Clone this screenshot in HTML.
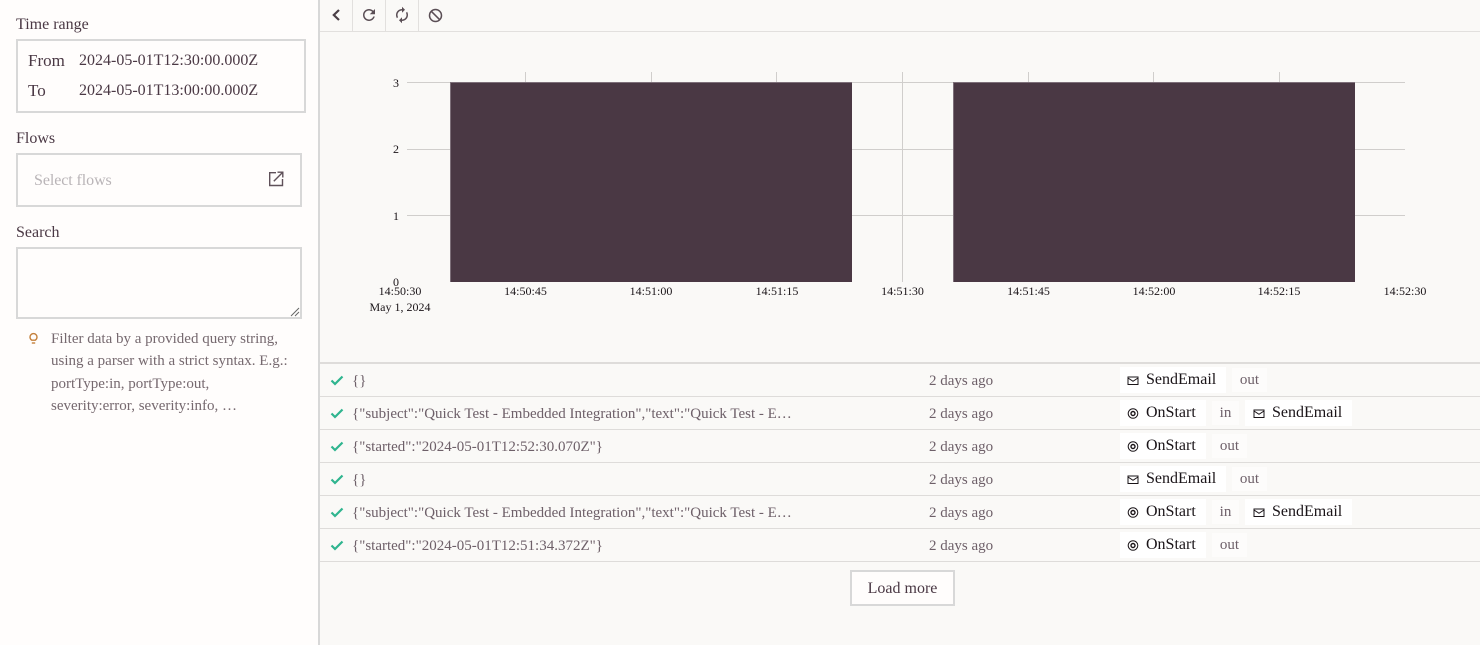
<!DOCTYPE html>
<html><head><meta charset="utf-8"><style>
*{box-sizing:border-box}
html,body{margin:0;padding:0;width:1480px;height:645px;overflow:hidden;background:#faf9f7;font-family:"Liberation Serif",serif;color:#4a3844}
.a{position:absolute;white-space:nowrap}
#side{left:0;top:0;width:320px;height:645px;background:#fffdfc;border-right:2px solid #d8d8d8}
.box{position:absolute;border:2px solid #d8d8d8;background:#fffdfc}
.l{font-size:16px;line-height:18px;margin-top:1px}
.hr{position:absolute;left:320px;width:1160px;height:1px;background:#dedcda}
.g{font-size:15px;line-height:18px;color:#6e6069;margin-top:1px}
.chip{position:absolute;background:#fff;height:26px;font-size:16px;line-height:22px;color:#1a1418;white-space:nowrap}
.chip span{position:absolute;top:2px;left:26px}
.chip svg{position:absolute;left:7px;top:8px}
.chip.r span{left:27px}
.chip.r svg{left:8px}
.pt{position:absolute;background:#fdfcfb;height:24px;font-size:15px;line-height:24px;color:#6e6069;text-align:center}
.sep{position:absolute;top:0;width:1px;height:31px;background:#e2e0de}
</style></head><body>
<div class="a" id="side"></div>
<div class="a l" style="left:16px;top:15px">Time range</div>
<div class="box" style="left:16px;top:39px;width:290px;height:74px"></div>
<div class="a l" style="left:28px;top:51px;font-size:17px">From</div>
<div class="a l" style="left:79px;top:51px">2024-05-01T12:30:00.000Z</div>
<div class="a l" style="left:28px;top:81px;font-size:17px">To</div>
<div class="a l" style="left:79px;top:81px">2024-05-01T13:00:00.000Z</div>
<div class="a l" style="left:16px;top:129px">Flows</div>
<div class="box" style="left:16px;top:153px;width:286px;height:54px"></div>
<div class="a l" style="left:34px;top:171px;color:#b9b4b7;letter-spacing:-.08px">Select flows</div>
<svg class="a" style="left:268px;top:171px" width="16" height="16" viewBox="0 0 16 16" fill="none" stroke="#5f5059" stroke-width="1.4"><path d="M8 1.700H1.700v12.800h12.800V8"/><path d="M5.800 10.200 14.500 1.500M9.500 1.200h5.300v5.300"/></svg>
<div class="a l" style="left:16px;top:223px">Search</div>
<div class="box" style="left:16px;top:247px;width:286px;height:72px"></div>
<svg class="a" style="left:290px;top:307px" width="10" height="10" stroke="#666" stroke-width="1"><path d="M1 9 9 1M5 9 9 5"/></svg>
<svg class="a" style="left:27px;top:331px" width="13" height="14" viewBox="0 0 13 14" fill="none" stroke="#c4803c" stroke-width="1.400"><path d="M4.700 9.200C3.600 8.400 3 7.400 3 6.100a3.500 3.500 0 0 1 7 0c0 1.300-.6 2.300-1.700 3.100z"/><path d="M4.800 12h3.400"/></svg>
<div class="a" style="left:51px;top:328px;font-size:15px;line-height:22.4px;color:#76696f">Filter data by a provided query string,<br>using a parser with a strict syntax. E.g.:<br>portType:in, portType:out,<br>severity:error, severity:info, …</div>

<div class="a" style="left:320px;top:0;width:1160px;height:32px;border-bottom:1px solid #e2e0de"></div>
<div class="sep" style="left:352px"></div><div class="sep" style="left:385px"></div><div class="sep" style="left:418px"></div>
<svg class="a" style="left:328px;top:7px" width="16" height="16" viewBox="0 0 16 16" fill="none" stroke="#4a3f46" stroke-width="2.200"><path d="M11 3 5.800 8l5.200 5"/></svg>
<svg class="a" style="left:360px;top:6px" width="18" height="18" viewBox="0 0 24 24" fill="#5a4e55"><path d="M17.650 6.350C16.200 4.900 14.210 4 12 4c-4.420 0-7.990 3.580-7.990 8s3.570 8 7.990 8c3.730 0 6.840-2.550 7.730-6h-2.080c-.82 2.330-3.040 4-5.650 4-3.310 0-6-2.690-6-6s2.690-6 6-6c1.660 0 3.140.69 4.220 1.780L13 11h7V4l-2.350 2.350z"/></svg>
<svg class="a" style="left:393px;top:6px" width="18" height="18" viewBox="0 0 24 24" fill="#5a4e55"><path transform="matrix(-1 0 0 1 24 0)" d="M12 4V1L8 5l4 4V6c3.310 0 6 2.690 6 6 0 1.010-.25 1.970-.7 2.800l1.460 1.460C19.540 15.030 20 13.570 20 12c0-4.420-3.580-8-8-8zm0 14c-3.310 0-6-2.690-6-6 0-1.010.25-1.970.7-2.800L5.240 7.740C4.460 8.970 4 10.430 4 12c0 4.420 3.580 8 8 8v3l4-4-4-4v3z"/></svg>
<svg class="a" style="left:428px;top:8px" width="15" height="15" viewBox="0 0 15 15" fill="none" stroke="#5a4e55" stroke-width="1.500"><circle cx="7.500" cy="7.500" r="6"/><path d="M3.300 3.300l8.400 8.400"/></svg>

<svg class="a" style="left:320px;top:0" width="1160" height="362" font-family="Liberation Serif,serif" font-size="12" fill="#1a1418">
<g stroke="#d0cecc" stroke-width="1" shape-rendering="crispEdges">
<path d="M87 82.500H1085M87 149.500H1085M87 215.500H1085"/>
<path d="M205.500 72V282M331.500 72V282M456.500 72V282M582.500 72V282M708.500 72V282M833.500 72V282M959.500 72V282"/>
</g>
<rect x="130" y="82" width="402" height="200" fill="#7d6f79"/>
<rect x="633" y="82" width="402" height="200" fill="#7d6f79"/>
<rect x="131" y="83" width="401" height="199" fill="#4a3844"/>
<rect x="634" y="83" width="401" height="199" fill="#4a3844"/>
<g text-anchor="middle">
<text x="76" y="87">3</text><text x="76" y="153">2</text><text x="76" y="220">1</text><text x="76" y="286">0</text>
<text x="80" y="295">14:50:30</text><text x="80" y="311">May 1, 2024</text>
<text x="205.500" y="295">14:50:45</text><text x="331" y="295">14:51:00</text><text x="457" y="295">14:51:15</text><text x="582.500" y="295">14:51:30</text><text x="708.500" y="295">14:51:45</text><text x="834" y="295">14:52:00</text><text x="959" y="295">14:52:15</text><text x="1085" y="295">14:52:30</text>
</g></svg>

<div class="hr" style="top:362px;height:2px"></div>
<div class="hr" style="top:396px"></div><div class="hr" style="top:429px"></div><div class="hr" style="top:462px"></div><div class="hr" style="top:495px"></div><div class="hr" style="top:528px"></div><div class="hr" style="top:561px"></div>

<svg width="0" height="0" style="position:absolute"><defs>
<symbol id="ck" viewBox="0 0 14 12"><path d="M1.500 6.500 5 10 12.500 2.500" fill="none" stroke="#2fb58f" stroke-width="2.200"/></symbol>
<symbol id="ml" viewBox="0 0 12 12"><path d="M1 2H11V9.500H1Z M1 3 6 6.300 11 3" fill="none" stroke="#1a1418" stroke-width="1"/></symbol>
<symbol id="st" viewBox="0 0 12 12"><circle cx="6" cy="5.500" r="4.800" fill="none" stroke="#1a1418" stroke-width="1"/><circle cx="6" cy="5.500" r="2" fill="none" stroke="#1a1418" stroke-width="1.400"/></symbol>
</defs></svg>

<svg class="a" style="left:330px;top:374px" width="14" height="12"><use href="#ck"/></svg>
<div class="a g" style="left:352px;top:371px">{}</div>
<div class="a g" style="left:929px;top:371px">2 days ago</div>
<div class="chip" style="left:1120px;top:367px;width:106px"><svg width="12" height="12"><use href="#ml"/></svg><span>SendEmail</span></div>
<div class="pt" style="left:1232px;top:368px;width:35px">out</div>

<svg class="a" style="left:330px;top:407px" width="14" height="12"><use href="#ck"/></svg>
<div class="a g" style="left:352px;top:404px">{"subject":"Quick Test - Embedded Integration","text":"Quick Test - E…</div>
<div class="a g" style="left:929px;top:404px">2 days ago</div>
<div class="chip" style="left:1120px;top:400px;width:86px"><svg width="12" height="12"><use href="#st"/></svg><span>OnStart</span></div>
<div class="pt" style="left:1212px;top:401px;width:27px">in</div>
<div class="chip r" style="left:1245px;top:400px;width:107px"><svg width="12" height="12"><use href="#ml"/></svg><span>SendEmail</span></div>

<svg class="a" style="left:330px;top:440px" width="14" height="12"><use href="#ck"/></svg>
<div class="a g" style="left:352px;top:437px">{"started":"2024-05-01T12:52:30.070Z"}</div>
<div class="a g" style="left:929px;top:437px">2 days ago</div>
<div class="chip" style="left:1120px;top:433px;width:86px"><svg width="12" height="12"><use href="#st"/></svg><span>OnStart</span></div>
<div class="pt" style="left:1212px;top:434px;width:35px">out</div>

<svg class="a" style="left:330px;top:473px" width="14" height="12"><use href="#ck"/></svg>
<div class="a g" style="left:352px;top:470px">{}</div>
<div class="a g" style="left:929px;top:470px">2 days ago</div>
<div class="chip" style="left:1120px;top:466px;width:106px"><svg width="12" height="12"><use href="#ml"/></svg><span>SendEmail</span></div>
<div class="pt" style="left:1232px;top:467px;width:35px">out</div>

<svg class="a" style="left:330px;top:506px" width="14" height="12"><use href="#ck"/></svg>
<div class="a g" style="left:352px;top:503px">{"subject":"Quick Test - Embedded Integration","text":"Quick Test - E…</div>
<div class="a g" style="left:929px;top:503px">2 days ago</div>
<div class="chip" style="left:1120px;top:499px;width:86px"><svg width="12" height="12"><use href="#st"/></svg><span>OnStart</span></div>
<div class="pt" style="left:1212px;top:500px;width:27px">in</div>
<div class="chip r" style="left:1245px;top:499px;width:107px"><svg width="12" height="12"><use href="#ml"/></svg><span>SendEmail</span></div>

<svg class="a" style="left:330px;top:539px" width="14" height="12"><use href="#ck"/></svg>
<div class="a g" style="left:352px;top:536px">{"started":"2024-05-01T12:51:34.372Z"}</div>
<div class="a g" style="left:929px;top:536px">2 days ago</div>
<div class="chip" style="left:1120px;top:532px;width:86px"><svg width="12" height="12"><use href="#st"/></svg><span>OnStart</span></div>
<div class="pt" style="left:1212px;top:533px;width:35px">out</div>

<div class="box" style="left:850px;top:570px;width:105px;height:36px;text-align:center;font-size:16px;line-height:33px">Load more</div>
</body></html>
